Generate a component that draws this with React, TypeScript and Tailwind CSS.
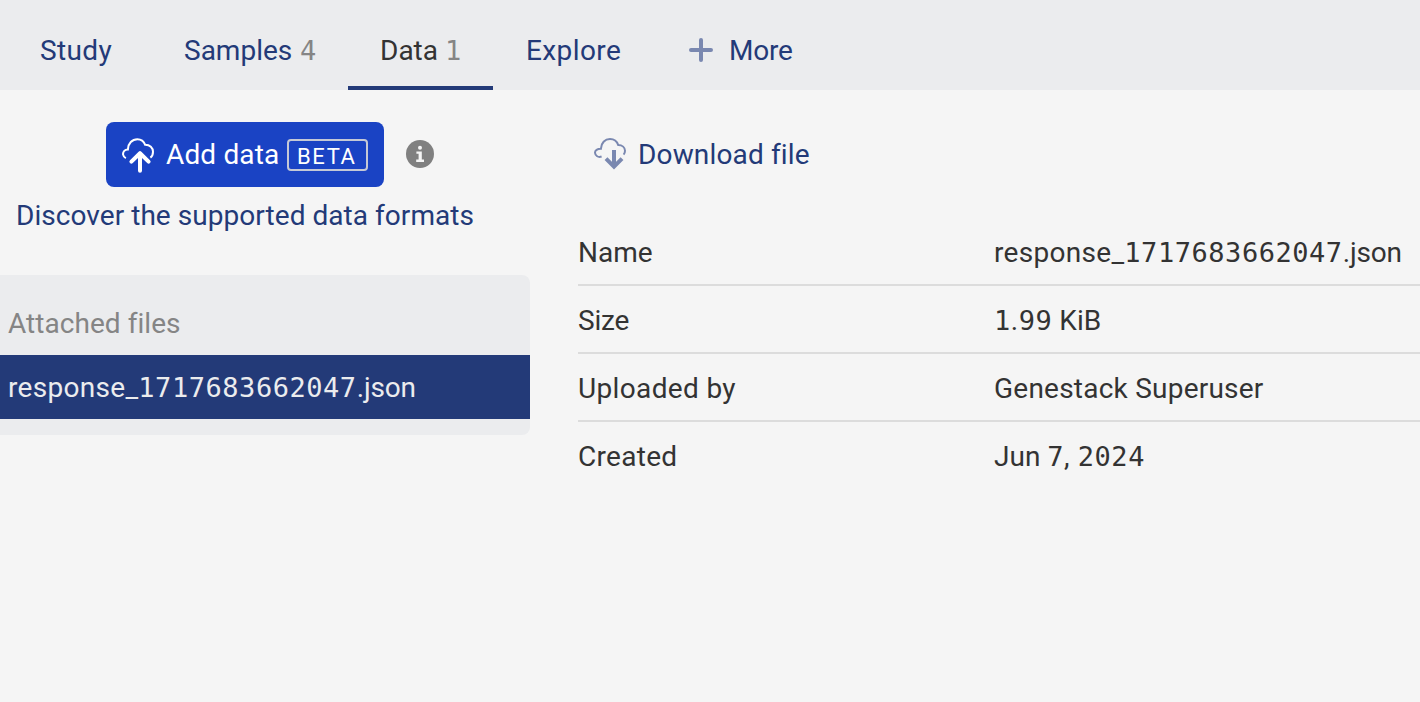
import type { ReactNode } from "react";

function UploadIcon() {
  return (
    <svg className="relative top-px h-9 w-8 shrink-0" viewBox="0 0 32 36" fill="none" stroke="currentColor">
      <path d="M3.9 20.2A5.1 5.1 0 0 1 1.1 16.6C0.7 13.6 3 11.3 5.9 11.4C6.1 5.3 10.2 1.2 15.4 1.2C19.4 1.2 21.9 3.5 23.1 6.7C27.9 6.6 31 9.8 31 13.7C31 16.7 30 18.5 28.4 19.6" strokeWidth="2" />
      <path d="M18 32.8V16" strokeWidth="4" strokeLinecap="round" />
      <path d="M9.4 23.6L18 15.2L26.6 23.6" strokeWidth="4" strokeLinecap="round" strokeLinejoin="round" />
    </svg>
  );
}

function DownloadIcon() {
  return (
    <svg className="h-8 w-8 shrink-0" viewBox="0 0 32 32" fill="none" stroke="#7a88b0">
      <path d="M7.6 18.5C4.2 19.8 1.2 17.8 1 14.8C0.9 12.4 3.4 10.9 6.9 10.8C7 5 11 1 16 1C20 1 23 3.4 24.2 7C28.2 7.1 31 9.6 31 12.8C31 14.4 30.6 15.6 29.6 16.6" strokeWidth="2" />
      <path d="M20 12V28" strokeWidth="4" />
      <path d="M12 20.6L20 28.6L28 20.6" strokeWidth="4" />
    </svg>
  );
}

function InfoIcon() {
  return (
    <svg className="relative -top-px size-7 shrink-0" viewBox="0 0 28 28">
      <circle cx="14" cy="14" r="14" fill="#808080" />
      <circle cx="14" cy="7.8" r="2" fill="#f5f5f5" />
      <path d="M10.4 11.4h5.4v8.2h2.2v2.4h-7.8v-2.4h2.4v-5.8h-2.2z" fill="#f5f5f5" />
    </svg>
  );
}

function Digits({ children }: { children: ReactNode }) {
  return <span className="font-['DejaVu_Sans_Mono',monospace] text-[27px] leading-none tracking-[0.54px]">{children}</span>;
}

function FileName() {
  return (
    <>
      <span className="tracking-[0.3px]">response_</span>
      <Digits>1717683662047</Digits>
      <span className="tracking-[-0.15px]">.json</span>
    </>
  );
}

function Row({ label, children, last = false }: { label: ReactNode; children: ReactNode; last?: boolean }) {
  return (
    <div className={last ? "flex h-[68px] pb-0.5" : "flex h-[68px] border-b-2 border-[#dcdcdc]"}>
      <div className="w-[416px] shrink-0 leading-[70px]">{label}</div>
      <div className="leading-[70px]">{children}</div>
    </div>
  );
}

export default function App() {
  return (
    <div className="h-[702px] w-full overflow-hidden bg-[#f5f5f5] font-['Roboto',sans-serif] text-[28px] whitespace-nowrap text-[#333333]">
      <nav className="flex h-[90px] bg-[#ebecee] pl-2 leading-[102px] text-[#233a78]">
        <a className="w-36 pl-8 tracking-[0.35px]">Study</a>
        <a className="flex w-[196px] pl-8">
          <span className="w-[116px]">Samples</span>
          <span className="text-[#858585]"><Digits>4</Digits></span>
        </a>
        <a className="flex w-[145px] border-b-4 border-[#233a78] pl-8 text-[#333333]">
          <span className="w-[65px]">Data</span>
          <span className="text-[#858585]"><Digits>1</Digits></span>
        </a>
        <a className="w-[196px] pl-[33px] tracking-[0.4px]">Explore</a>
        <a className="flex pt-[38px] leading-[26px]">
          <svg className="size-6" viewBox="0 0 24 24" stroke="#7a88b0" strokeWidth="4" strokeLinecap="round">
            <path d="M12 2v20M2 12h20" />
          </svg>
          <span className="pl-4 tracking-[-0.2px]">More</span>
        </a>
      </nav>
      <main className="flex">
        <section className="w-[530px] shrink-0 pt-8">
          <div className="flex items-center pl-[106px]">
            <button className="flex h-[65px] w-[278px] items-center rounded-lg bg-[#1a43c4] pl-4 text-white">
              <UploadIcon />
              <span className="w-[133px] shrink-0 pl-3 text-left tracking-[0.15px]">Add data</span>
              <span className="h-8 w-[81px] shrink-0 rounded border-2 border-[#c5c9d6] pl-2 text-left text-[22px] leading-[31px] tracking-[1.6px]">BETA</span>
            </button>
            <div className="pl-[22px]"><InfoIcon /></div>
          </div>
          <a className="block pt-2 pl-4 leading-[41px] tracking-[0.05px] text-[#233a78]">Discover the supported data formats</a>
          <div className="mt-[39px] h-40 rounded-r-lg bg-[#ebecee] pt-4">
            <h2 className="h-16 pl-2 leading-[66px] tracking-[0.05px] text-[#858585]">Attached files</h2>
            <div className="h-16 bg-[#233a78] pl-2 leading-[66px] text-[#ebecee]"><FileName /></div>
          </div>
        </section>
        <section className="ml-12 grow">
          <a className="flex h-32 pt-12 pl-4 text-[#233a78]">
            <DownloadIcon />
            <span className="pl-3 leading-[34px] tracking-[0.15px]">Download file</span>
          </a>
          <Row label="Name"><FileName /></Row>
          <Row label={<span className="tracking-[-0.2px]">Size</span>}>
            <Digits>1</Digits><span className="tracking-[0.6px]">.</span><Digits>99</Digits><span> KiB</span>
          </Row>
          <Row label={<span className="tracking-[0.35px]">Uploaded by</span>}>
            <span className="tracking-[0.23px]">Genestack Superuser</span>
          </Row>
          <Row label={<span className="tracking-[0.3px]">Created</span>} last>
            Jun <Digits>7</Digits><span className="tracking-[0.6px]">, </span><Digits>2024</Digits>
          </Row>
        </section>
      </main>
    </div>
  );
}
